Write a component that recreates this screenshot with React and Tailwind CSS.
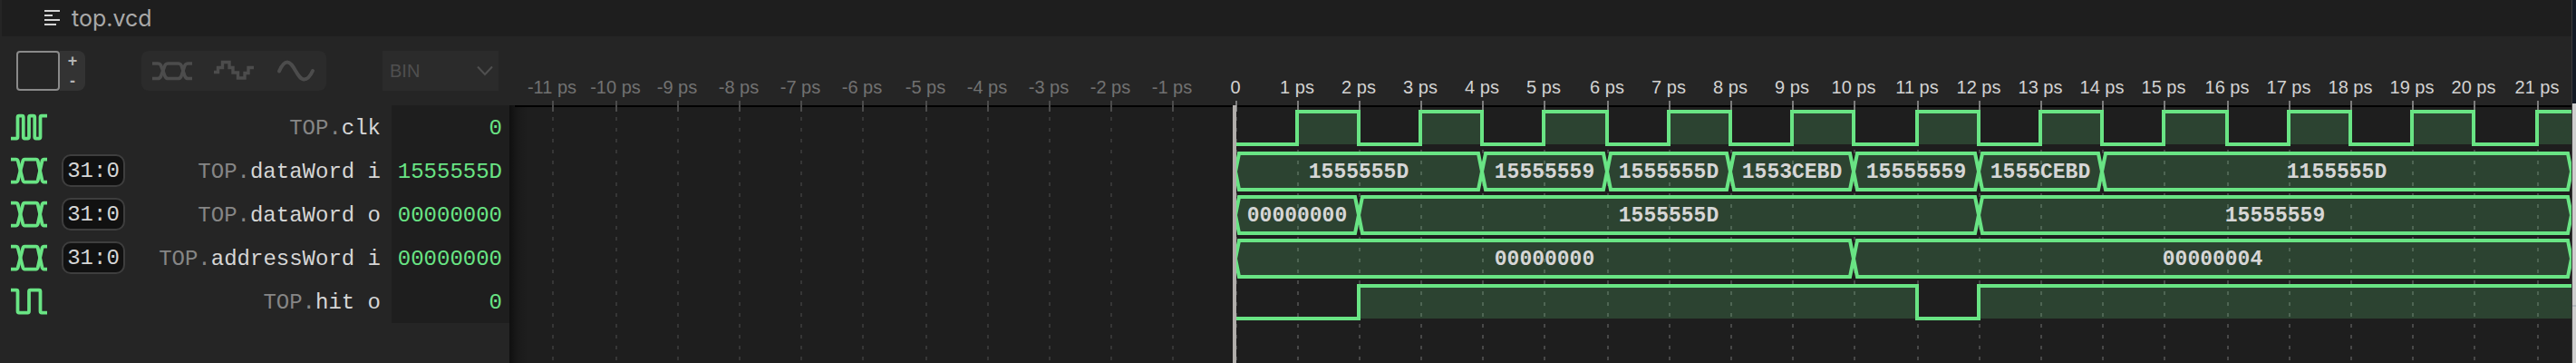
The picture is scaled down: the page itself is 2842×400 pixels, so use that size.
import React from "react";

const GREEN = "#69e484";

const SIGNALS = [
  { name: "clk", icon: "clock", value: "0" },
  { name: "dataWord i", icon: "bus", range: "31:0", value: "1555555D" },
  { name: "dataWord o", icon: "bus", range: "31:0", value: "00000000" },
  { name: "addressWord i", icon: "bus", range: "31:0", value: "00000000" },
  { name: "hit o", icon: "bit", value: "0" },
];

const WAVES = [
  {
    kind: "bit",
    steps: Array.from({ length: 22 }, (_, t) => [t, t % 2]),
  },
  {
    kind: "bus",
    steps: [
      [0, "1555555D"],
      [4, "15555559"],
      [6, "1555555D"],
      [8, "1553CEBD"],
      [10, "15555559"],
      [12, "1555CEBD"],
      [14, "1155555D"],
    ],
  },
  {
    kind: "bus",
    steps: [
      [0, "00000000"],
      [2, "1555555D"],
      [12, "15555559"],
    ],
  },
  {
    kind: "bus",
    steps: [
      [0, "00000000"],
      [10, "00000004"],
    ],
  },
  {
    kind: "bit",
    steps: [
      [0, 0],
      [2, 1],
      [11, 0],
      [12, 1],
    ],
  },
];

const TICKS = Array.from({ length: 33 }, (_, i) => i - 11);
const ORIGIN = 801;
const PITCH = 68.39;
const END = 2275;
const RULER = 76;
const ROW = 48;

const tickX = (t) => 2 * Math.round((ORIGIN + t * PITCH) / 2);
const edgeX = (t) => tickX(t) - 1;

const ICON_PATHS = {
  clock: [
    "M0 13H2.4Q3 13 3 12.4V3.6Q3 3 3.6 3H4.9Q5.5 3 5.5 3.6V12.4Q5.5 13 6.1 13H7.4Q8 13 8 12.4V3.6Q8 3 8.6 3H9.9Q10.5 3 10.5 3.6V12.4Q10.5 13 11.1 13H12.4Q13 13 13 12.4V3.6Q13 3 13.6 3H16",
  ],
  bit: [
    "M0 3H2.4Q3 3 3 3.6V12.4Q3 13 3.6 13H7.4Q8 13 8 12.4V3.6Q8 3 8.6 3H12.4Q13 3 13 3.6V12.4Q13 13 13.6 13H16",
  ],
  bus: [
    "M0 3H2.2Q2.9 3 3.1 3.7L5.3 12.3Q5.5 13 6.1 13H11.1Q11.7 13 11.9 12.3L13.8 3.7Q14 3 14.6 3H16",
    "M0 13H2.2Q2.9 13 3.1 12.3L5.3 3.7Q5.5 3 6.1 3H11.1Q11.7 3 11.9 3.7L13.8 12.3Q14 13 14.6 13H16",
  ],
};

function SignalIcon({ kind }) {
  return (
    <svg className="size-10 shrink-0" viewBox="0 0 16 16" fill="none" stroke={GREEN} strokeWidth="1.5" aria-hidden="true">
      {ICON_PATHS[kind].map((d) => (
        <path key={d} d={d} />
      ))}
    </svg>
  );
}

function TitleBar() {
  return (
    <header className="ml-0.5 flex h-10 items-center gap-3 bg-[#1e1e1e] pl-[47px]">
      <svg className="h-5 w-[18px]" viewBox="0 0 18 20" fill="#d4d4d4" aria-hidden="true">
        <rect x="0" y="1" width="17" height="2" />
        <rect x="0" y="6" width="9" height="2" />
        <rect x="0" y="11" width="17" height="2" />
        <rect x="0" y="16" width="13" height="2" />
      </svg>
      <h1 className="font-['Inter',sans-serif] text-[25px] leading-10 text-[#a9a9a9]">top.vcd</h1>
    </header>
  );
}

function Toolbar() {
  return (
    <div className="flex h-[76px] items-start pt-4 pl-[18px]">
      <div className="flex h-11">
        <button type="button" aria-label="Signal color" className="w-12 rounded border-2 border-[#8a8a8a]" />
        <div className="flex w-7 flex-col rounded-r-lg bg-[#333333] text-[18px] font-bold text-[#b4b4b4]">
          <button type="button" className="h-[22px] leading-[22px]">+</button>
          <button type="button" className="h-[22px] leading-[22px]">-</button>
        </div>
      </div>
      <div className="ml-[62px] flex h-11 w-[204px] items-center justify-between rounded-lg bg-[#2b2b2b] px-2.5">
        <button type="button" aria-label="Bus wave">
          <svg className="h-11 w-12" viewBox="0 0 48 44" fill="none" stroke="#4c4c4c" strokeWidth="3.6" aria-hidden="true">
            <path d="M2 14H8Q10.5 14 11.5 16L16 28Q17 30.5 19.500 30.5H30.5Q33 30.5 34 28L38 16Q39 14 41.5 14H46" />
            <path d="M2 30.5H8Q10.5 30.5 11.5 28L16 16Q17 14 19.500 14H30.5Q33 14 34 16L38 28Q39 30.5 41.5 30.5H46" />
          </svg>
        </button>
        <button type="button" aria-label="Stepped wave">
          <svg className="h-11 w-12" viewBox="0 0 48 44" fill="none" stroke="#4c4c4c" strokeWidth="3.4" aria-hidden="true">
            <path d="M2 23.5H6.5V18.5H11.5V12.5H19V18.5H23V24H28.5V30H36V24.5H40V18.5H46" />
          </svg>
        </button>
        <button type="button" aria-label="Smooth wave">
          <svg className="h-11 w-12" viewBox="0 0 48 44" fill="none" stroke="#4c4c4c" strokeWidth="4" strokeLinecap="round" aria-hidden="true">
            <path d="M6 22.5C9 15.5 12 12.5 15 12.5C22 12.5 26 31.5 33.5 31.5C37 31.5 40 28.5 43 22" />
          </svg>
        </button>
      </div>
      <div className="ml-[62px] grid h-11 w-32 items-center bg-[#2b2b2b]">
        <select
          aria-label="Number format"
          className="col-start-1 row-start-1 h-11 w-full appearance-none bg-transparent pl-2 text-[20px] text-[#4f4f4f]"
        >
          <option>BIN</option>
        </select>
        <svg
          className="pointer-events-none col-start-1 row-start-1 mr-1.5 h-3 w-[18px] justify-self-end"
          viewBox="0 0 18 12"
          fill="none"
          stroke="#4f4f4f"
          strokeWidth="2"
          aria-hidden="true"
        >
          <path d="M1 1.5L9 10L17 1.5" />
        </svg>
      </div>
    </div>
  );
}

function SignalList() {
  return (
    <ul className="font-['Liberation_Mono',monospace] text-[24px]">
      {SIGNALS.map((s) => (
        <li key={s.name} className="flex h-12 items-center pl-3">
          <SignalIcon kind={s.icon} />
          {s.range && (
            <span className="ml-4 flex h-9 w-[70px] items-center justify-center rounded-[10px] border-2 border-[#3e3e3e] bg-[#111111] pt-0.5 text-[#d6d6d6]">
              {s.range}
            </span>
          )}
          <span className="flex-1 pt-[3px] pr-3 text-right whitespace-nowrap text-[#d6d6d6]">
            <span className="text-[#868686]">TOP.</span>
            {s.name}
          </span>
          <span className="flex h-12 w-[130px] items-center justify-end bg-[#1e1e1e] pt-[3px] pr-2 text-[#69e484]">
            {s.value}
          </span>
        </li>
      ))}
    </ul>
  );
}

function BitWave({ steps, top }) {
  const high = top + 7;
  const low = top + 43;
  const level = (v) => (v ? high : low);
  let line = `M${edgeX(0)} ${level(steps[0][1])}`;
  steps.forEach(([t, v]) => {
    line += `H${edgeX(t)}V${level(v)}`;
  });
  line += `H${END + 1}`;
  return (
    <g>
      {steps.map(([t, v], i) => {
        if (!v) return null;
        const x = edgeX(t);
        const end = i + 1 < steps.length ? edgeX(steps[i + 1][0]) : END + 1;
        return <rect key={t} x={x} y={high} width={end - x} height={low - high} fill={GREEN} fillOpacity="0.19" />;
      })}
      <path d={line} fill="none" stroke={GREEN} strokeWidth="4" />
    </g>
  );
}

function BusWave({ steps, top }) {
  const y1 = top + 5;
  const y2 = top + 45;
  const mid = top + 25;
  return (
    <g>
      {steps.map(([t, value], i) => {
        const a = edgeX(t);
        const b = i + 1 < steps.length ? edgeX(steps[i + 1][0]) : END;
        return (
          <g key={t}>
            <path
              d={`M${a} ${mid}L${a + 4} ${y1}H${b - 4}L${b} ${mid}L${b - 4} ${y2}H${a + 4}Z`}
              fill={GREEN}
              fillOpacity="0.19"
              stroke={GREEN}
              strokeWidth="4"
            />
            <text
              x={(a + b) / 2}
              y={top + 32}
              textAnchor="middle"
              className="fill-[#d6d6d6] font-['Liberation_Mono',monospace] text-[23px] font-bold"
            >
              {value}
            </text>
          </g>
        );
      })}
    </g>
  );
}

function WavePlot() {
  return (
    <svg className="block min-h-[360px] w-full flex-1" role="img" aria-label="Signal waveforms">
      <defs>
        <linearGradient id="edge-shade" x1="0" x2="1" y1="0" y2="0">
          <stop offset="0" stopColor="#000" stopOpacity="0.5" />
          <stop offset="0.4" stopColor="#000" stopOpacity="0.18" />
          <stop offset="1" stopColor="#000" stopOpacity="0" />
        </linearGradient>
      </defs>
      <rect x="0" y={RULER} width="100%" height="100%" fill="#1e1e1e" />
      <rect x="6" y={RULER} width="100%" height="2" fill="#000" />
      {TICKS.map((t) => {
        const x = tickX(t);
        const past = t < 0;
        return (
          <g key={t}>
            <text
              x={x - 1}
              y="63"
              textAnchor="middle"
              className={past ? "fill-[#717171] text-[20px]" : "fill-[#d2d2d2] text-[20px]"}
            >
              {t === 0 ? "0" : `${t} ps`}
            </text>
            <line x1={x} x2={x} y1="89" y2="100%" stroke={past ? "#363636" : "#484848"} strokeWidth="2" strokeDasharray="4 8" />
            <line x1={x} x2={x} y1="71" y2="83" stroke={past ? "#4b4b4b" : "#7c7c7c"} strokeWidth="2" />
          </g>
        );
      })}
      {WAVES.map((w, i) => {
        const top = RULER + i * ROW;
        return w.kind === "bit" ? (
          <BitWave key={i} steps={w.steps} top={top} />
        ) : (
          <BusWave key={i} steps={w.steps} top={top} />
        );
      })}
      <rect x={ORIGIN - 3} y={RULER} width="4" height="100%" fill="#b0adaa" />
      <rect x="0" y={RULER} width="20" height="100%" fill="url(#edge-shade)" />
    </svg>
  );
}

export default function App() {
  return (
    <div className="flex min-h-screen bg-[#252525] font-['Liberation_Sans',sans-serif]">
      <div className="flex min-w-0 flex-1 flex-col border-r border-[#3a3a3a]">
        <TitleBar />
        <main className="flex flex-1">
          <section className="w-[562px] shrink-0">
            <Toolbar />
            <SignalList />
          </section>
          <section className="flex min-w-0 flex-1 flex-col">
            <WavePlot />
          </section>
        </main>
      </div>
      <div className="flex w-1 flex-col bg-[#cdcdcd]">
        <div className="h-[114px] bg-[#141a24]" />
        <div className="h-[222px]" />
        <div className="h-0.5 bg-[#b4b8be]" />
      </div>
    </div>
  );
}
